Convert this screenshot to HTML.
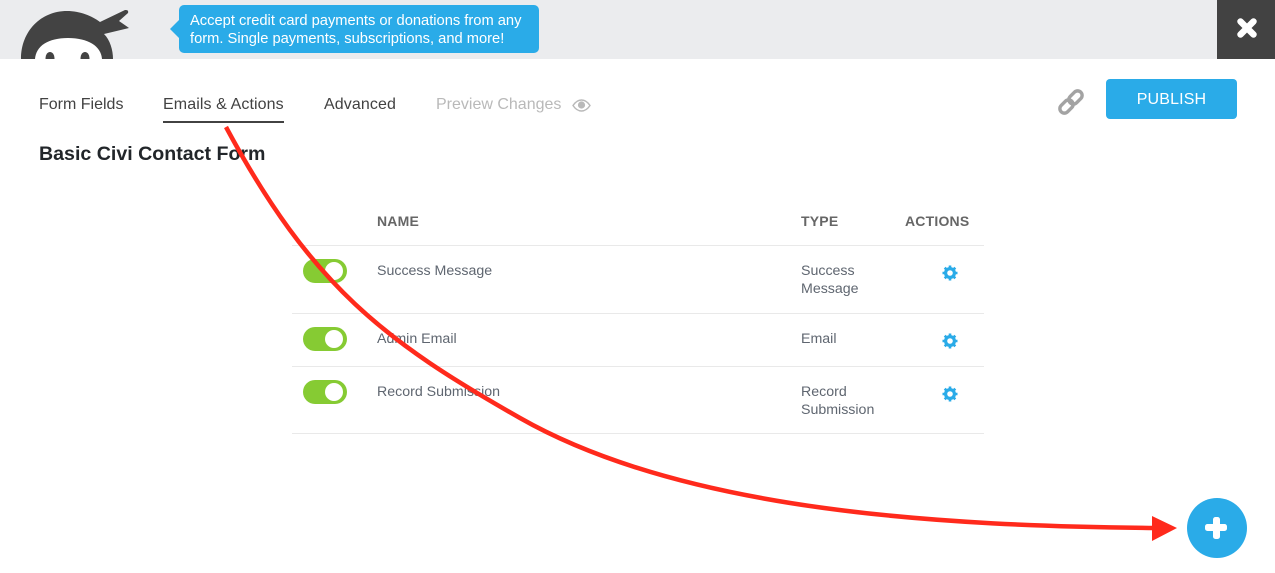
<!DOCTYPE html>
<html><head><meta charset="utf-8"><style>
html,body{margin:0;padding:0;background:#fff}
body{width:1275px;height:573px;position:relative;overflow:hidden;font-family:"Liberation Sans",sans-serif}
.a{position:absolute;white-space:nowrap}
.nav{top:95px;font-size:16px;line-height:19px;color:#424242}
.th{top:213px;font-size:14px;line-height:16px;font-weight:bold;color:#666;letter-spacing:.2px}
.td{font-size:14.2px;line-height:18px;color:#5f6670}
.hr{left:292px;width:692px;height:1px;background:#e9e9e9}
.tg{left:303px;width:44px;height:24px;border-radius:12px;background:#86cb33}
.tg i{position:absolute;left:22px;top:3px;width:18px;height:18px;border-radius:50%;background:#fff}
</style></head><body>
<div class="a" style="left:0;top:0;width:1275px;height:59px;background:#ebecee"></div>
<svg class="a" style="left:0;top:0" width="150" height="59" viewBox="0 0 150 59">
<path d="M21 59C21 31 41 11 67 11C80 11 92 16 100 22L125 10Q129 9.500 128 13L119 21L129 28L104 34C110 40 113 50 113 59Z" fill="#434343"/>
<path d="M35 59C36 46 48 38 68 38C88 38 101 46 102 59Z" fill="#fff"/>
<ellipse cx="50" cy="58" rx="4.500" ry="6" fill="#434343"/><ellipse cx="85" cy="58" rx="4.500" ry="6" fill="#434343"/>
</svg>
<div class="a" style="left:179px;top:5px;width:360px;height:48px;background:#2aabe8;border-radius:5px"></div>
<div class="a" style="left:170px;top:20px;width:0;height:0;border:9px solid transparent;border-left:0;border-right-color:#2aabe8"></div>
<div class="a" style="left:190px;top:12px;font-size:14.7px;line-height:18px;color:#fff">Accept credit card payments or donations from any<br>form. Single payments, subscriptions, and more!</div>
<div class="a" style="left:1217px;top:0;width:58px;height:59px;background:#424242"></div>
<svg class="a" style="left:1236px;top:17px" width="22" height="22" viewBox="0 0 22 22"><path d="M4.500 4.500L17.500 17.500M17.500 4.500L4.500 17.500" stroke="#fff" stroke-width="6.500" stroke-linecap="round"/></svg>

<div class="a nav" style="left:39px">Form Fields</div>
<div class="a nav" style="left:163px;letter-spacing:.1px">Emails &amp; Actions</div>
<div class="a" style="left:163px;top:121px;width:121px;height:2px;background:#424242"></div>
<div class="a nav" style="left:324px;letter-spacing:.1px">Advanced</div>
<div class="a nav" style="left:436px;color:#b9b9b9">Preview Changes</div>
<svg class="a" style="left:572px;top:99px" width="19" height="13" viewBox="0 0 19 13"><path d="M1 6.500C4 2 7 1 9.500 1S15 2 18 6.500C15 11 12 12 9.500 12S4 11 1 6.500Z" fill="none" stroke="#b9b9b9" stroke-width="1.400"/><circle cx="9.500" cy="6" r="3.600" fill="#b9b9b9"/></svg>

<svg class="a" style="left:1057px;top:87px" width="29" height="30" viewBox="0 0 29 30" fill="none" stroke="#a3a3a3" stroke-width="3.400"><rect x="14" y="3" width="9" height="15" rx="4.500" transform="rotate(45 18.500 10.500)"/><rect x="5" y="12" width="9" height="15" rx="4.500" transform="rotate(45 9.500 19.500)"/></svg>
<div class="a" style="left:1106px;top:79px;width:131px;height:40px;background:#2aabe8;border-radius:4px;color:#fff;font-size:16px;line-height:41px;text-align:center;letter-spacing:.15px">PUBLISH</div>
<div class="a" style="left:39px;top:142px;font-size:19.6px;line-height:24px;font-weight:bold;color:#22262a">Basic Civi Contact Form</div>

<div class="a th" style="left:377px">NAME</div>
<div class="a th" style="left:801px">TYPE</div>
<div class="a th" style="left:905px">ACTIONS</div>
<div class="a hr" style="top:245px"></div>
<div class="a hr" style="top:313px"></div>
<div class="a hr" style="top:366px"></div>
<div class="a hr" style="top:433px"></div>

<div class="a tg" style="top:259px"><i></i></div>
<div class="a tg" style="top:327px"><i></i></div>
<div class="a tg" style="top:380px"><i></i></div>
<div class="a td" style="left:377px;top:262px">Success Message</div>
<div class="a td" style="left:377px;top:330px">Admin Email</div>
<div class="a td" style="left:377px;top:383px">Record Submission</div>
<div class="a td" style="left:801px;top:262px">Success<br>Message</div>
<div class="a td" style="left:801px;top:330px">Email</div>
<div class="a td" style="left:801px;top:383px">Record<br>Submission</div>

<svg class="a" style="left:942px;top:265px" width="16" height="16" viewBox="0 0 16 16"><circle cx="8" cy="8" r="4.400" fill="none" stroke="#2aabe8" stroke-width="3.200"/><path d="M8 .5V15.500M.5 8H15.500M2.700 2.700L13.300 13.300M13.300 2.700L2.700 13.300" stroke="#2aabe8" stroke-width="2.600" stroke-dasharray="2.800 9.400"/></svg>
<svg class="a" style="left:942px;top:333px" width="16" height="16" viewBox="0 0 16 16"><circle cx="8" cy="8" r="4.400" fill="none" stroke="#2aabe8" stroke-width="3.200"/><path d="M8 .5V15.500M.5 8H15.500M2.700 2.700L13.300 13.300M13.300 2.700L2.700 13.300" stroke="#2aabe8" stroke-width="2.600" stroke-dasharray="2.800 9.400"/></svg>
<svg class="a" style="left:942px;top:386px" width="16" height="16" viewBox="0 0 16 16"><circle cx="8" cy="8" r="4.400" fill="none" stroke="#2aabe8" stroke-width="3.200"/><path d="M8 .5V15.500M.5 8H15.500M2.700 2.700L13.300 13.300M13.300 2.700L2.700 13.300" stroke="#2aabe8" stroke-width="2.600" stroke-dasharray="2.800 9.400"/></svg>

<div class="a" style="left:1187px;top:498px;width:60px;height:60px;border-radius:50%;background:#2aabe8"></div>
<div class="a" style="left:1205px;top:524px;width:22px;height:7px;border-radius:2.500px;background:#fff"></div>
<div class="a" style="left:1212.500px;top:516.500px;width:7px;height:22px;border-radius:2.500px;background:#fff"></div>

<svg class="a" style="left:0;top:0" width="1275" height="573" viewBox="0 0 1275 573" fill="none">
<path d="M226 127C312 287 386 342 520 418C687 513 950 526 1155 528" stroke="#ff2a1c" stroke-width="4.500"/>
<path d="M1152 516L1177 528L1152 541Z" fill="#ff2a1c"/>
</svg>
</body></html>
